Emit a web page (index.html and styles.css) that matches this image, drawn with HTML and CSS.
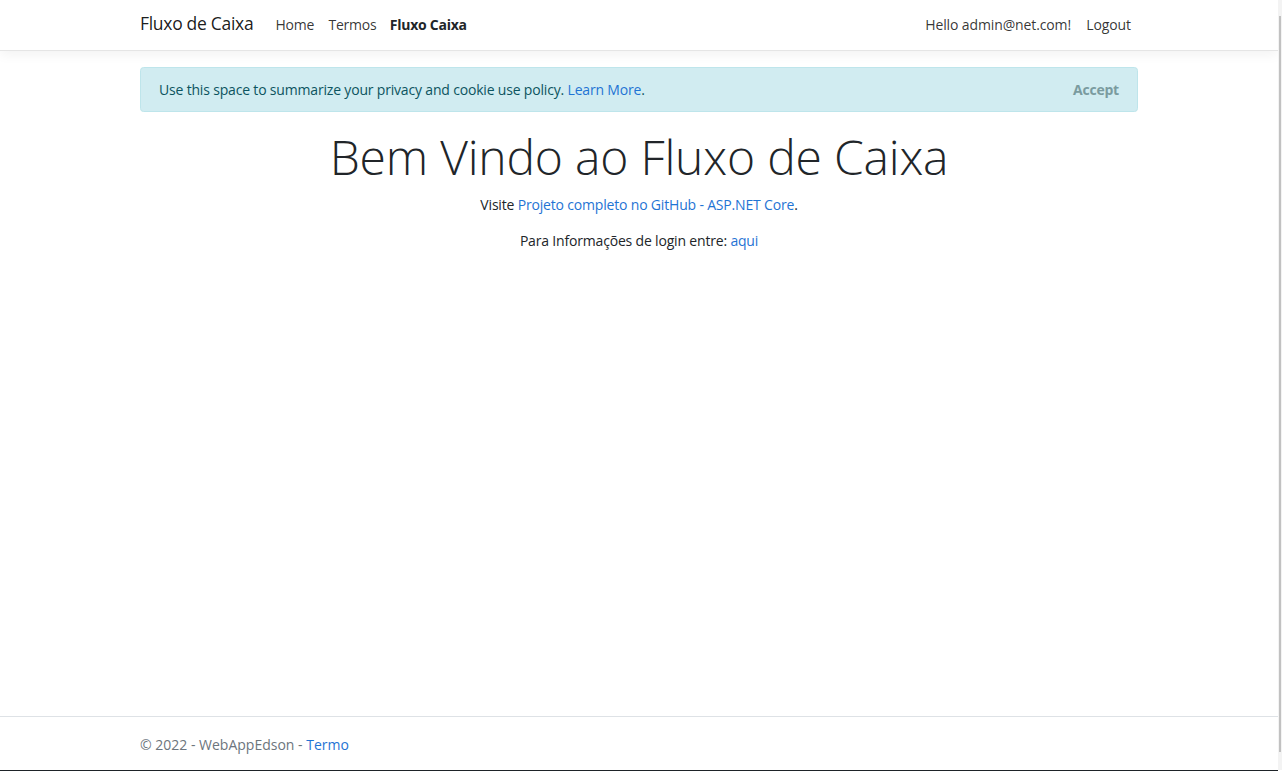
FILE: index.html
```html
<!DOCTYPE html>
<html lang="pt-br">
<head>
<meta charset="utf-8">
<title>Fluxo de Caixa</title>
<link rel="stylesheet" href="styles.css">
</head>
<body>
<div class="page">
  <header class="navbar">
    <div class="container nav-inner">
      <a class="brand" href="#">Fluxo de Caixa</a>
      <ul class="nav">
        <li><a class="nav-link" href="#">Home</a></li>
        <li><a class="nav-link" href="#">Termos</a></li>
        <li><a class="nav-link active" href="#">Fluxo Caixa</a></li>
      </ul>
      <ul class="nav nav-right">
        <li><a class="nav-link" href="#">Hello admin@net.com!</a></li>
        <li><button class="nav-link logout" type="button">Logout</button></li>
      </ul>
    </div>
  </header>

  <div class="container">
    <div class="alert">
      <span>Use this space to summarize your privacy and cookie use policy. <a href="#">Learn More</a>.</span>
      <button class="accept" type="button">Accept</button>
    </div>

    <main class="main">
      <h1 class="display">Bem Vindo ao Fluxo de Caixa</h1>
      <p>Visite <a href="#">Projeto completo no GitHub - ASP.NET Core</a>.</p>
      <p>Para Informações de login entre: <a href="#">aqui</a></p>
    </main>
  </div>

  <footer class="footer">
    <div class="container">© 2022 - WebAppEdson - <a href="#">Termo</a></div>
  </footer>
  <div class="window-edge"></div>
</div>
<div class="scrollbar"><div class="thumb"></div></div>
</body>
</html>
```

FILE: styles.css
```css
html, body {
  margin: 0;
  padding: 0;
  height: 100%;
  overflow: hidden;
  background: #fff;
}

body {
  font-family: "Segoe UI", "Open Sans", "Noto Sans", sans-serif;
  font-size: 14px;
  letter-spacing: -0.18px;
  line-height: 1.5;
  color: #212529;
}

a {
  color: #1f74d4;
  text-decoration: none;
}

.page {
  width: 1278px;
  height: 771px;
  display: flex;
  flex-direction: column;
}

.container {
  width: 998px;
  margin: 0 auto;
}

.navbar {
  height: 50px;
  border-bottom: 1px solid #e5e5e5;
  box-shadow: 0 4px 11px rgba(0, 0, 0, 0.05);
  display: flex;
  align-items: center;
  flex-shrink: 0;
}

.nav-inner {
  display: flex;
  align-items: center;
  margin-top: -2px;
}

.brand {
  font-size: 17.5px;
  letter-spacing: -0.3px;
  color: rgba(0, 0, 0, 0.9);
  margin-right: 15px;
  line-height: 1;
}

.nav {
  list-style: none;
  margin: 0;
  padding: 0;
  display: flex;
  align-items: center;
}

.nav-right {
  margin-left: auto;
}

.nav-link {
  display: block;
  padding: 7.2px;
  color: rgba(0, 0, 0, 0.8);
  font-size: 14px;
  letter-spacing: -0.25px;
}

.nav-link.active {
  font-weight: 700;
  color: #212529;
  margin-left: -1px;
}

.nav-right .nav-link {
  letter-spacing: -0.12px;
}

.logout {
  background: none;
  border: 0;
  font-family: inherit;
  line-height: 1.5;
  padding: 7.2px 7.2px 7.2px 8px;
}

.alert {
  margin-top: 16px;
  margin-bottom: 14.4px;
  padding: 10.8px 18px;
  background: #d1ecf1;
  border: 1px solid #bee5eb;
  border-radius: 3.6px;
  color: #0c5460;
  display: flex;
  justify-content: space-between;
  align-items: center;
  line-height: 21.6px;
}

.accept {
  background: none;
  border: 0;
  padding: 0;
  font-family: inherit;
  font-size: 14px;
  letter-spacing: -0.2px;
  font-weight: 700;
  color: #7a9b9f;
  line-height: 1.5;
}

.main {
  text-align: center;
}

.display {
  font-size: 48px;
  font-weight: 300;
  letter-spacing: -0.2px;
  line-height: 60.5px;
  margin: 0 0 7.2px;
  color: #212529;
}

.main p {
  margin: 0 0 14.4px;
  line-height: 21.6px;
}

.footer {
  margin-top: auto;
  box-sizing: border-box;
  height: 54px;
  padding-top: 2px;
  line-height: 51px;
  border-top: 1px solid #dee2e6;
  color: #6c757d;
  white-space: nowrap;
  letter-spacing: 0;
  flex-shrink: 0;
}

.window-edge {
  height: 1px;
  background: #1e2328;
  flex-shrink: 0;
}

.scrollbar {
  position: fixed;
  top: 0;
  right: 0;
  width: 4px;
  height: 770px;
  background: #f3f3f3;
}

.thumb {
  margin: 16px 0 0 1px;
  width: 2px;
  height: 736px;
  background: #c1c1c1;
}
```
